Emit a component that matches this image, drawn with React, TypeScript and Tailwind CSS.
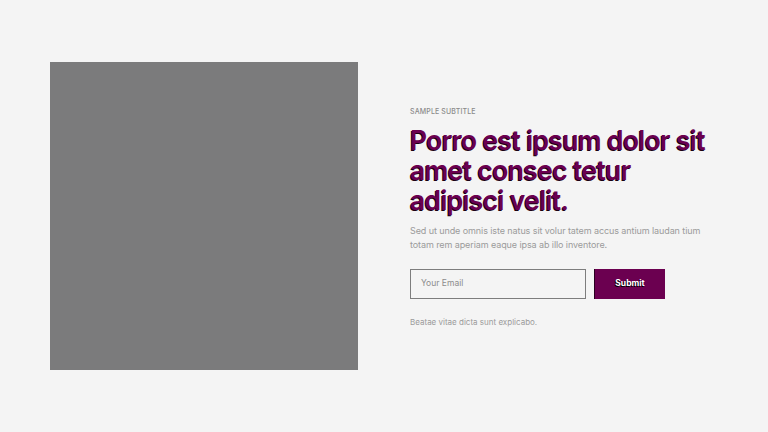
export default function App() {
  return (
    <div className="w-[768px] h-[432px] bg-[#f4f4f4] flex items-center pl-[50px]" style={{ fontFamily: "Inter, 'Noto Sans', sans-serif" }}>
      <div className="w-[308px] h-[308px] bg-[#7b7b7c] shrink-0" />
      <div className="ml-[52px] flex flex-col w-[310px] mt-[2px]">
        <div className="text-[7px] font-medium tracking-[0.02em] text-[#8a8a8a] uppercase leading-[10px]">Sample Subtitle</div>
        <h1 className="mt-[8px] text-[26.5px] font-semibold leading-[30px] tracking-[-0.025em] text-[#6b0050] [text-shadow:-1px_1px_0_#1a0012]">
          Porro est ipsum dolor sit amet consec tetur adipisci velit.
        </h1>
        <p className="mt-[9px] text-[9px] leading-[14.5px] tracking-[-0.01em] text-[#9b9b9b]">
          Sed ut unde omnis iste natus sit volur tatem accus antium laudan tium totam rem aperiam eaque ipsa ab illo inventore.
        </p>
        <div className="mt-[16px] flex gap-[8px]">
          <div className="w-[176px] h-[30px] border border-[#7d7d7d] flex items-center pl-[10px] text-[8.5px] text-[#8c8c8c]">Your Email</div>
          <div className="w-[71px] h-[30px] bg-[#6b0050] border-l border-[#2a0020] flex items-center justify-center text-[8.5px] font-bold text-white [text-shadow:-1px_1px_0_#000]">Submit</div>
        </div>
        <div className="mt-[17px] text-[8px] text-[#9b9b9b] leading-[12px]">Beatae vitae dicta sunt explicabo.</div>
      </div>
    </div>
  );
}
